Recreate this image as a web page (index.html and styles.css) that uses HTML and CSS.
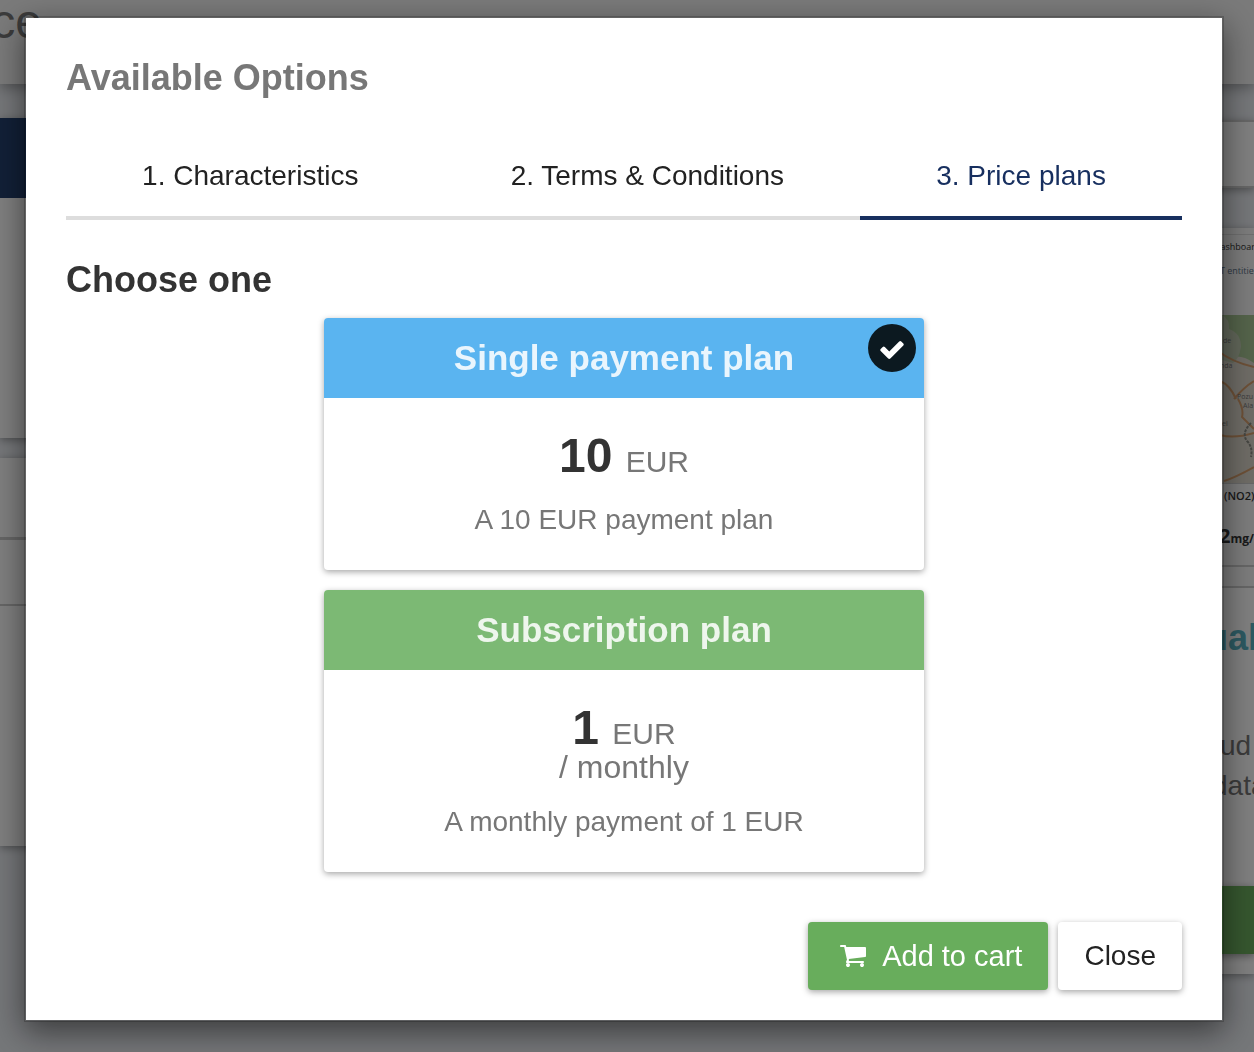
FILE: index.html
```html
<!DOCTYPE html>
<html lang="en">
<head>
<meta charset="utf-8">
<meta name="viewport" content="width=device-width, initial-scale=1">
<title>Available Options</title>
<link rel="stylesheet" href="styles.css">
</head>
<body>
<div class="page" aria-hidden="true">
  <header class="page-header"><span class="page-title">ce</span></header>
  <div class="page-columns">
    <aside class="sidebar">
      <div class="menu"><div class="menu-current"></div></div>
      <div class="filters">
        <div class="filter-head"></div>
        <div class="filter-row"></div>
      </div>
    </aside>
    <main class="results">
      <div class="search"></div>
      <article class="offer">
        <div class="preview">
          <p class="preview-line">Dashboar</p>
          <p class="preview-line preview-link">T entities</p>
          <svg class="map" viewBox="0 0 52 168">
            <rect width="52" height="168" fill="#ddd8cc"/>
            <path d="M20 0h32v48q-12-8-20-6-6-18-12-22z" fill="#a9c795"/>
            <path d="M20 0q8 4 7 14 12 4 12 18-2 12-8 16l-11-3z" fill="#c3ceb4"/>
            <g fill="none" stroke="#d9a06e" stroke-width="2">
              <path d="M16 36q14 11 36 16M18 66q10 4 16 18M32 84q10-12 20-18M36 84q6 10 4 18l12 12M18 120q14 4 34-2M22 166q12-4 30-14"/>
            </g>
            <path d="M49 108q-10 10-4 18 6 6 4 16" fill="none" stroke="#8c8c84" stroke-width="2" stroke-dasharray="3 1"/>
            <g class="map-label">
              <text x="21" y="28">de</text><text x="18" y="53">nda</text>
              <text x="35" y="84">Pozu</text><text x="41" y="93">Ala</text><text x="20" y="111">el</text>
            </g>
          </svg>
          <p class="metric-name">(NO2)</p>
          <p class="metric"><span class="metric-value">2</span>mg/</p>
        </div>
        <div class="offer-body">
          <h2 class="offer-title">ual</h2>
          <div class="offer-text">
            <p class="offer-line">ud</p>
            <p>data</p>
          </div>
        </div>
        <div class="offer-action"></div>
      </article>
    </main>
  </div>
</div>

<div class="overlay">
  <section class="modal" role="dialog" aria-modal="true" aria-labelledby="modal-title">
    <h1 class="modal-title" id="modal-title">Available Options</h1>
    <nav class="tabs">
      <a class="tab" href="#characteristics">1. Characteristics</a>
      <a class="tab" href="#terms">2. Terms &amp; Conditions</a>
      <a class="tab tab-active" href="#plans" aria-current="step">3. Price plans</a>
    </nav>
    <h2 class="section-title" id="choose">Choose one</h2>
    <div class="plans" id="plans" role="radiogroup" aria-labelledby="choose">
      <label class="plan">
        <input class="plan-radio" type="radio" name="plan" value="single" checked>
        <span class="plan-head plan-single">Single payment plan</span>
        <span class="plan-check">
          <svg width="24" height="18" viewBox="121 334 1550 1188" fill="#fff"><path d="M1671 566q0 40-28 68l-724 724-136 136q-28 28-68 28t-68-28l-136-136-362-362q-28-28-28-68t28-68l136-136q28-28 68-28t68 28l294 295 656-657q28-28 68-28t68 28l136 136q28 28 28 68z"/></svg>
        </span>
        <span class="plan-body">
          <span class="price"><b>10</b> <span class="currency">EUR</span></span>
          <span class="plan-text">A 10 EUR payment plan</span>
        </span>
      </label>
      <label class="plan">
        <input class="plan-radio" type="radio" name="plan" value="subscription">
        <span class="plan-head plan-subscription">Subscription plan</span>
        <span class="plan-check">
          <svg width="24" height="18" viewBox="121 334 1550 1188" fill="#fff"><path d="M1671 566q0 40-28 68l-724 724-136 136q-28 28-68 28t-68-28l-136-136-362-362q-28-28-28-68t28-68l136-136q28-28 68-28t68 28l294 295 656-657q28-28 68-28t68 28l136 136q28 28 28 68z"/></svg>
        </span>
        <span class="plan-body">
          <span class="price"><b>1</b> <span class="currency">EUR</span></span>
          <span class="period">/ monthly</span>
          <span class="plan-text">A monthly payment of 1 EUR</span>
        </span>
      </label>
    </div>
    <footer class="actions">
      <button class="btn btn-primary" type="button">
        <svg width="26" height="22" viewBox="0 256 1664 1408" fill="currentColor"><path d="M640 1536q0 52-38 90t-90 38-90-38-38-90 38-90 90-38 90 38 38 90zm896 0q0 52-38 90t-90 38-90-38-38-90 38-90 90-38 90 38 38 90zm128-1088v512q0 24-16.500 42.500t-40.500 21.500l-1044 122q13 60 13 70 0 16-24 64h920q26 0 45 19t19 45-19 45-45 19h-1024q-26 0-45-19t-19-45q0-11 8-31.500t16-36 21.500-40 15.500-29.500l-177-823h-204q-26 0-45-19t-19-45 19-45 45-19h256q16 0 28.500 6.500t19.500 15.500 13 24.500 8 26 5.500 29.500 4.500 26h1201q26 0 45 19t19 45z"/></svg>
        Add to cart
      </button>
      <button class="btn" type="button">Close</button>
    </footer>
  </section>
</div>
</body>
</html>
```

FILE: styles.css
```css
* { box-sizing: border-box; }

body {
  margin: 0;
  overflow: hidden;
  background: #ebeef3;
  color: #333;
  font: 28px/40px "Liberation Sans", Arial, sans-serif;
}

h1, h2, p { margin: 0; }

/* Page under the dialog */
.page { min-height: 100vh; }

.page-header {
  height: 84px;
  background: #f5f5f5;
  box-shadow: 0 4px 12px rgba(0, 0, 0, .3);
}

.page-title {
  display: flex;
  justify-content: flex-end;
  width: 42px;
  color: #777;
  font-size: 48px;
  line-height: 44px;
}

.page-columns {
  display: flex;
  justify-content: space-between;
}

.sidebar {
  width: 44px;
  padding-top: 34px;
}

.menu, .filters, .search, .offer {
  background: #fff;
  box-shadow: 0 2px 8px rgba(0, 0, 0, .35);
}

.menu { height: 320px; }
.menu-current { height: 80px; background: #24406f; }
.filters { height: 388px; margin-top: 20px; }
.filter-head { height: 82px; border-bottom: 3px solid #ccc; }
.filter-row { height: 66px; border-bottom: 2px solid #ccc; }

.results {
  width: 52px;
  padding-top: 36px;
}

.search {
  height: 68px;
  border: solid #ccc;
  border-width: 2px 0;
}

.offer {
  height: 746px;
  margin-top: 40px;
  white-space: nowrap;
}

.preview {
  height: 360px;
  padding-top: 6px;
  border-bottom: 2px solid #ccc;
  background: #f8f8f8;
  font: 9px/24px "Open Sans", sans-serif;
}

.preview-line {
  padding-left: 12px;
  border-top: 1px solid #ddd;
}

.preview-link { padding-left: 18px; border: 0; color: #5c7389; }
.map { display: block; width: 52px; height: 168px; margin-top: 32px; }
.map-label { fill: #777; font-size: 7px; }
.metric-name { padding-left: 22px; border-top: 1px solid #ccc; font-size: 11px; font-weight: 600; }

.metric {
  padding: 8px 0 6px 17px;
  border-bottom: 2px solid #ccc;
  font-size: 12px;
  font-weight: 700;
  line-height: 40px;
}

.metric-value { font-size: 20px; }
.offer-body { height: 298px; padding: 30px 0 0 4px; }
.offer-title { color: #5ab3c4; font-size: 36px; line-height: 40px; }
.offer-text { padding: 68px 0 0 6px; color: #777; }
.offer-line { padding-left: 8px; }
.offer-action { height: 68px; background: #6cae5e; box-shadow: 0 2px 8px rgba(0, 0, 0, .4); }

/* Dialog */
.overlay {
  position: fixed;
  inset: 0;
  padding: 16px 30px 0 24px;
  overflow: auto;
  background: rgba(0, 0, 0, .5);
}

.modal {
  padding: 40px 40px 30px;
  border: 2px solid rgba(0, 0, 0, .2);
  background: #fff;
  background-clip: padding-box;
  box-shadow: 0 10px 30px rgba(0, 0, 0, .5);
}

.modal-title { color: #777; font-size: 36px; }

.tabs {
  display: flex;
  margin: 40px 0;
}

.tab {
  flex: 1 1 auto;
  height: 82px;
  padding-top: 18px;
  border-bottom: 4px solid #ddd;
  color: #222;
  text-align: center;
  text-decoration: none;
}

.tab-active { border-color: #172f5f; color: #172f5f; }
.section-title { font-size: 36px; }

.plans {
  display: grid;
  gap: 20px;
  max-width: 600px;
  margin: 18px auto 50px;
}

.plan {
  position: relative;
  overflow: hidden;
  border-radius: 4px;
  box-shadow: 0 2px 6px rgba(0, 0, 0, .35);
  color: #777;
  text-align: center;
  cursor: pointer;
}

.plan-radio { position: absolute; opacity: 0; }

.plan-head {
  display: block;
  color: rgba(255, 255, 255, .87);
  font-size: 35px;
  font-weight: 700;
  line-height: 80px;
}

.plan-single { background: #5ab4f0; }
.plan-subscription { background: #7cb974; }

.plan-check {
  position: absolute;
  top: 6px;
  right: 8px;
  display: none;
  align-items: center;
  justify-content: center;
  width: 48px;
  height: 48px;
  padding-top: 4px;
  border-radius: 50%;
  background: #0c1920;
}

.plan-radio:checked ~ .plan-check { display: flex; }

.plan-body {
  display: flex;
  flex-direction: column;
  padding: 34px 20px 30px;
}

.price { font-size: 48px; line-height: 48px; }
.price b { color: #333; }
.currency { font-size: 30px; line-height: 30px; }
.period { font-size: 32px; line-height: 30px; }
.plan-text { margin-top: 20px; }

.actions {
  display: flex;
  justify-content: flex-end;
  gap: 10px;
}

.btn {
  display: flex;
  align-items: center;
  gap: 16px;
  height: 68px;
  padding: 0 26px;
  border: 0;
  border-radius: 4px;
  background: #fff;
  box-shadow: 0 2px 6px rgba(0, 0, 0, .35);
  color: #222;
  font: inherit;
}

.btn-primary { padding-left: 32px; background: #68ad5c; color: #fff; font-size: 29px; }
```
